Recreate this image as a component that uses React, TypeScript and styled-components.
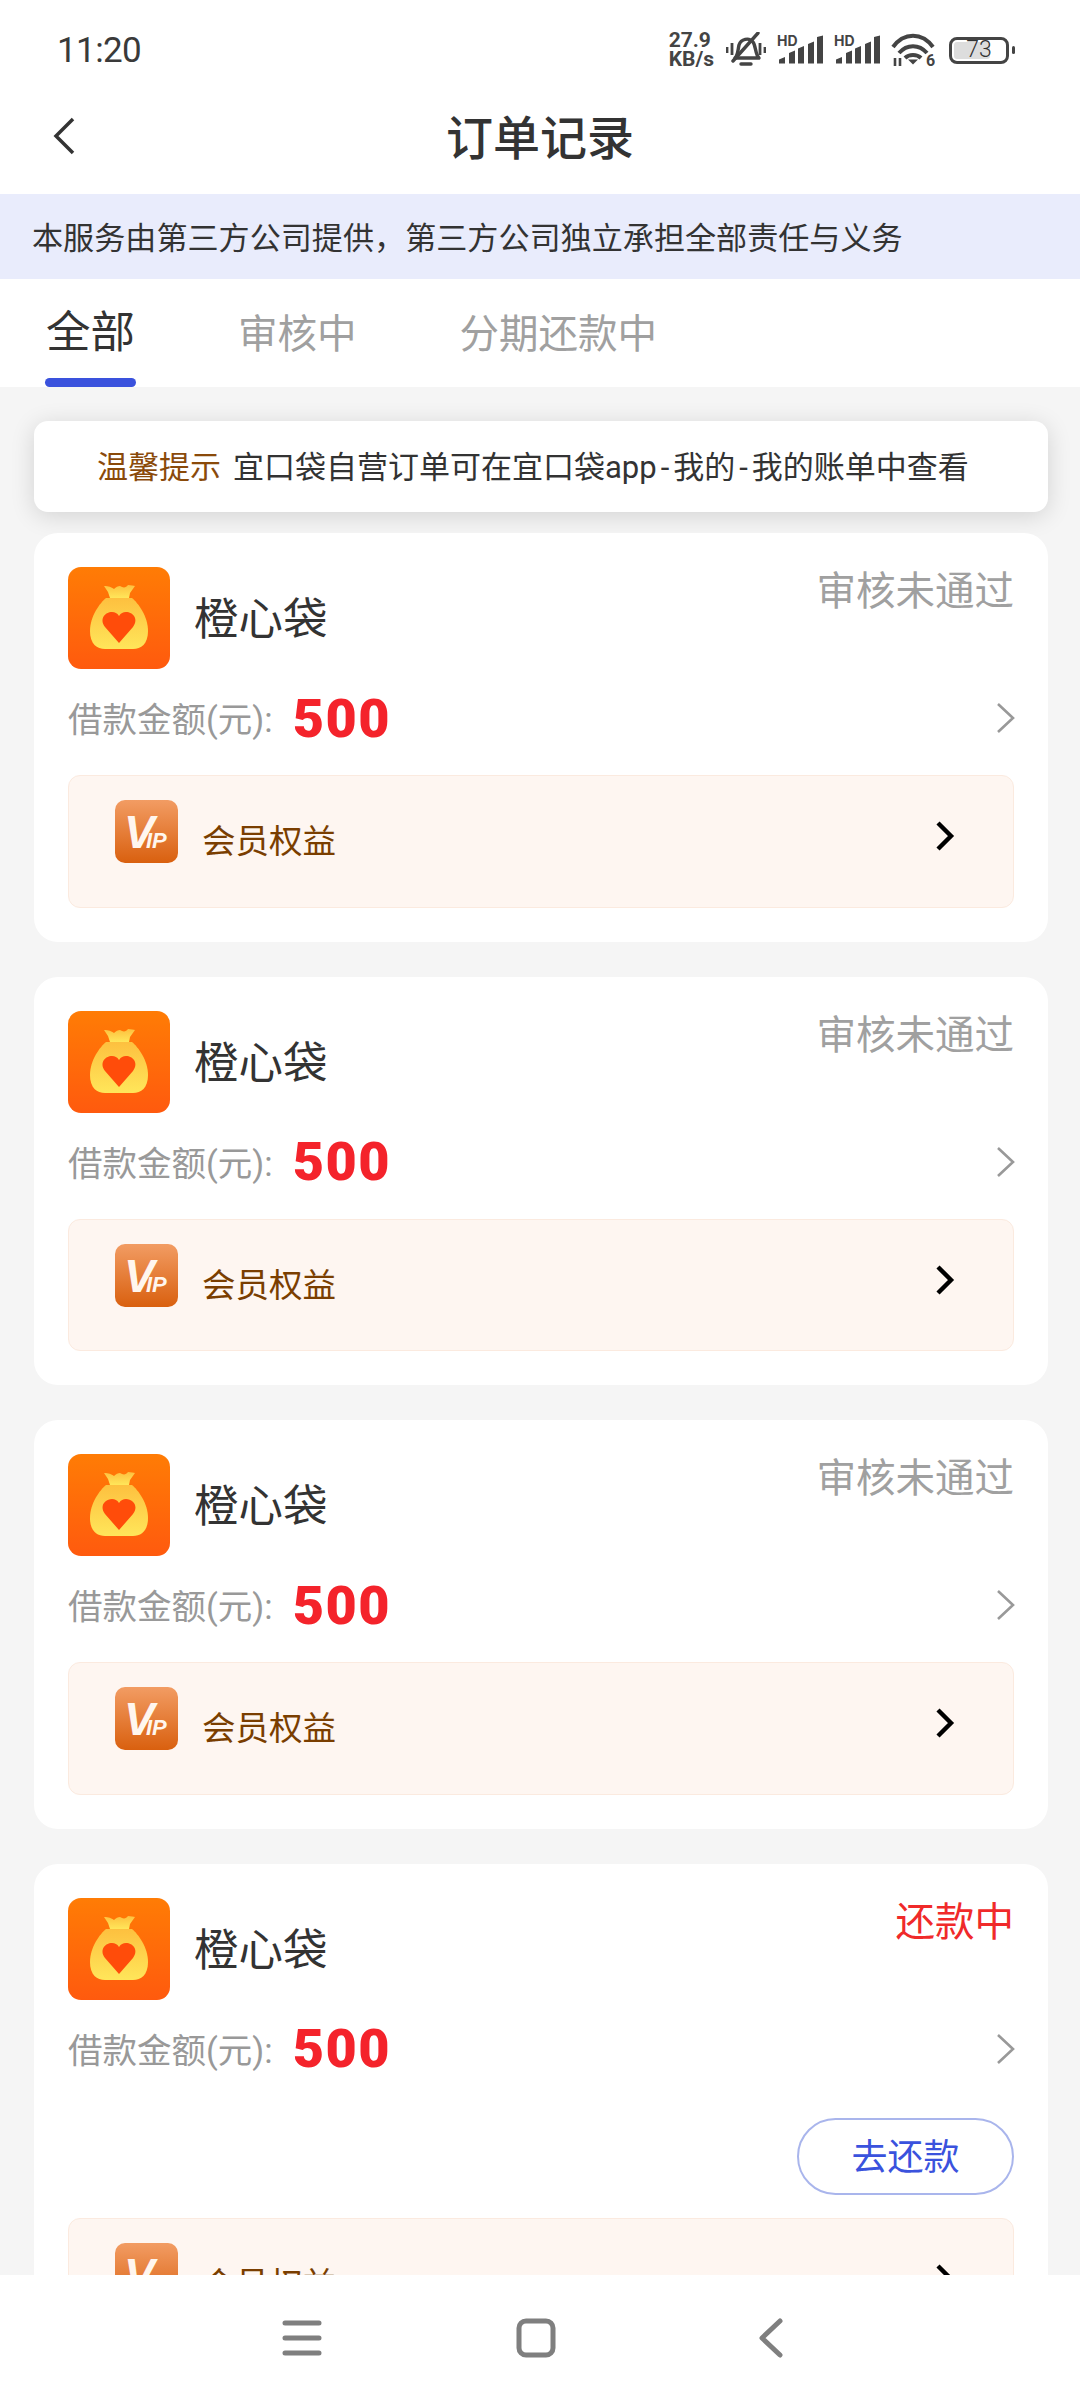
import styled, { createGlobalStyle } from "styled-components"

const GlobalStyle = createGlobalStyle`
  html, body {
    margin: 0;
    padding: 0;
    background: #fff;
  }
  body {
    font-family: Roboto, "Noto Sans CJK SC", sans-serif;
    color: #333;
  }
`

type Order = { status: string; paying?: boolean }

const orders: Order[] = [
  { status: '审核未通过' },
  { status: '审核未通过' },
  { status: '审核未通过' },
  { status: '还款中', paying: true },
]

const BagLogo = ({ id }: { id: number }) => (
  <LogoSvg viewBox="0 0 102 102">
    <defs>
      <linearGradient id={`bg${id}`} x1="0" y1="0" x2="0" y2="1">
        <stop offset="0" stopColor="#ff7c05" />
        <stop offset="1" stopColor="#ff5a0e" />
      </linearGradient>
      <linearGradient id={`bag${id}`} x1="0" y1="0" x2="0" y2="1">
        <stop offset="0" stopColor="#fdc03f" />
        <stop offset="1" stopColor="#ffe65a" />
      </linearGradient>
    </defs>
    <rect width="102" height="102" rx="13" fill={`url(#bg${id})`} />
    <path d="M36 19c5 0 7 1 10 3 2-2 4-3 6-3 3 2 6 2 8-1 3 0 6 1 7 1l-5 7-1 5H42l-2-6z" fill={`url(#bag${id})`} />
    <path d="M38 31h26c6 5 16 18 16 33 0 13-7 18-15 18H37c-8 0-15-5-15-18 0-15 10-28 16-33z" fill={`url(#bag${id})`} />
    <path d="M51 76 37 60c-6-8 0-15 7-15 3 0 5 1 7 4 2-3 4-4 7-4 7 0 13 7 7 15z" fill="#ff4c0a" />
  </LogoSvg>
)

const VipLogo = ({ id }: { id: number }) => (
  <VipSvg viewBox="0 0 63 63">
    <defs>
      <linearGradient id={`vip${id}`} x1="0" y1="0" x2="0" y2="1">
        <stop offset="0" stopColor="#f29c63" />
        <stop offset="1" stopColor="#d9600f" />
      </linearGradient>
    </defs>
    <rect width="63" height="63" rx="10" fill={`url(#vip${id})`} />
    <VipBig x="9" y="48">V</VipBig>
    <VipSmall x="31" y="48">IP</VipSmall>
  </VipSvg>
)

const SignalIcon = () => (
  <SignalSvg width="46" height="34" viewBox="0 -4 46 34">
    <SignalLabel x="0" y="11">HD</SignalLabel>
    <path d="M2 24.500 8 22v6.500H2zM12 18l6-2.500v13h-6zM21 13.500l6-2.500v17.500h-6zM31 9l6-2.500v22h-6zM40 2l6-1.500v28h-6z" fill="#444" />
  </SignalSvg>
)

const App = () => {
  return (
    <Page>
      <GlobalStyle />
      <Header>
        <StatusBar>
          <Clock>11:20</Clock>
          <StatusIcons>
            <NetSpeed>27.9<br />KB/s</NetSpeed>
            <svg width="40" height="36" viewBox="0 0 40 36" fill="none" stroke="#444" strokeWidth="3.4">
              <path d="M9 26c3-3 3-9 4-13 2-6 10-8 14-3 3 4 2 12 6 16z" strokeLinejoin="round" />
              <path d="M15 32h10M32 1 7 29" strokeLinecap="round" />
              <path d="M1 15v6M6 11v12M34 11v12M39 15v6" strokeWidth="2.8" />
            </svg>
            <SignalIcon />
            <SignalIcon />
            <WifiSvg width="44" height="38" viewBox="0 0 44 38">
              <path d="M2 14C13 -1 31 -1 42 14M8 20c8-9 20-9 28 0M14 25c4-4 12-4 16 0" fill="none" stroke="#444" strokeWidth="4" />
              <path d="M17 26.500h10l-5 5z" fill="#444" />
              <path d="M4 25v8M9 25v8" stroke="#444" strokeWidth="2.600" />
              <WifiNum x="35" y="33">6</WifiNum>
            </WifiSvg>
            <Battery>
              <BatteryFill />
              <BatteryLevel>73</BatteryLevel>
            </Battery>
            <BatteryCap />
          </StatusIcons>
        </StatusBar>
        <NavBar>
          <BackIcon width="24" height="38" viewBox="0 0 24 38" fill="none" stroke="#333" strokeWidth="3.5">
            <path d="M21 2 4 19l17 17" />
          </BackIcon>
          <Title>订单记录</Title>
        </NavBar>
      </Header>
      <Notice>本服务由第三方公司提供，第三方公司独立承担全部责任与义务</Notice>
      <Tabs>
        <Tab $active>全部</Tab>
        <Tab>审核中</Tab>
        <Tab>分期还款中</Tab>
      </Tabs>
      <Content>
        <Hint>
          <HintLabel>温馨提示</HintLabel>
          <span>宜口袋自营订单可在宜口袋app<Dash>-</Dash>我的<Dash>-</Dash>我的账单中查看</span>
        </Hint>
        <CardList>
          {orders.map((order, i) => (
            <Card key={i}>
              <CardHead>
                <BagLogo id={i} />
                <Name>橙心袋</Name>
                <Status $paying={order.paying}>{order.status}</Status>
              </CardHead>
              <AmountRow>
                <AmountLabel>借款金额(元):</AmountLabel>
                <Amount>500</Amount>
                <RowArrow width="22" height="32" viewBox="0 0 22 32" fill="none" stroke="#999" strokeWidth="2.6">
                  <path d="M3 2l15 14L3 30" />
                </RowArrow>
              </AmountRow>
              {order.paying && (
                <PayRow>
                  <PayButton>去还款</PayButton>
                </PayRow>
              )}
              <VipBox>
                <VipLogo id={i} />
                <VipText>会员权益</VipText>
                <VipArrow width="20" height="30" viewBox="0 0 20 30" fill="none" stroke="#000" strokeWidth="4.4">
                  <path d="M3 2l13 13L3 28" />
                </VipArrow>
              </VipBox>
            </Card>
          ))}
        </CardList>
      </Content>
      <BottomBar>
        <svg width="40" height="36" viewBox="0 0 40 36" stroke="#7f7f7f" strokeWidth="5" strokeLinecap="round">
          <path d="M3 3h34M3 18h34M3 33h34" />
        </svg>
        <svg width="40" height="40" viewBox="0 0 40 40" fill="none" stroke="#7f7f7f" strokeWidth="5">
          <rect x="3" y="3" width="34" height="34" rx="7" />
        </svg>
        <svg width="40" height="40" viewBox="0 0 40 40" fill="none" stroke="#7f7f7f" strokeWidth="5" strokeLinecap="round" strokeLinejoin="round">
          <path d="M30 3 12 20l18 17" />
        </svg>
      </BottomBar>
    </Page>
  )
}

const Page = styled.div`
  width: 1080px;
  height: 2400px;
  display: flex;
  flex-direction: column;
  overflow: hidden;
  background: #f5f5f5;
`

const Header = styled.header`
  background: #fff;
  flex: none;
`

const StatusBar = styled.div`
  height: 76px;
  padding: 12px 65px 0 57px;
  display: flex;
  align-items: center;
  justify-content: space-between;
`

const Clock = styled.span`
  font-size: 35px;
  letter-spacing: -0.6px;
  color: #3a3a3a;
`

const StatusIcons = styled.div`
  display: flex;
  align-items: center;
  gap: 11px;
`

const NetSpeed = styled.span`
  margin-right: 1px;
  font-size: 21px;
  line-height: 19px;
  font-weight: 700;
  color: #444;
  text-align: left;
`

const SignalSvg = styled.svg`
  margin-top: -4px;
`

const WifiSvg = styled.svg`
  margin-bottom: -4px;
`

const SignalLabel = styled.text`
  font-family: Inter, sans-serif;
  font-size: 14px;
  font-weight: 700;
  fill: #444;
`

const WifiNum = styled.text`
  font-family: Roboto, sans-serif;
  font-size: 16px;
  font-weight: 700;
  fill: #444;
`

const Battery = styled.div`
  position: relative;
  width: 60px;
  height: 27px;
  margin-left: 3px;
  box-sizing: border-box;
  border: 3px solid #444;
  border-radius: 8px;
  display: flex;
  align-items: center;
  justify-content: center;
`

const BatteryFill = styled.div`
  position: absolute;
  left: 2px;
  top: 2px;
  bottom: 2px;
  width: 36px;
  border-radius: 3px;
  background: #ddd;
`

const BatteryLevel = styled.span`
  position: relative;
  font-size: 23px;
  font-weight: 300;
  line-height: 20px;
  color: #333;
`

const BatteryCap = styled.div`
  width: 3px;
  height: 8px;
  margin-left: -8px;
  border-radius: 2px;
  background: #444;
`

const NavBar = styled.div`
  height: 106px;
  padding-bottom: 12px;
  box-sizing: border-box;
  position: relative;
  display: flex;
  align-items: center;
  justify-content: center;
`

const BackIcon = styled.svg`
  position: absolute;
  left: 52px;
  top: 29px;
`

const Title = styled.h1`
  margin: 0 0 2px;
  font-size: 47px;
  font-weight: 500;
  color: #333;
`

const Notice = styled.div`
  flex: none;
  height: 85px;
  padding: 0 0 2px 32px;
  box-sizing: border-box;
  display: flex;
  align-items: center;
  background: #e9ecfc;
  font-size: 31.1px;
  color: #333;
`

const Tabs = styled.div`
  flex: none;
  height: 108px;
  padding-left: 46px;
  box-sizing: border-box;
  display: flex;
  gap: 103px;
  background: #fff;
`

const Tab = styled.div<{ $active?: boolean }>`
  position: relative;
  height: 108px;
  line-height: ${p => (p.$active ? '108px' : '112px')};
  font-size: ${p => (p.$active ? '44.5px' : '39.5px')};
  color: ${p => (p.$active ? '#333' : '#a0a0a0')};

  ${p => p.$active && `
    &::after {
      content: '';
      position: absolute;
      left: -1px;
      right: -1px;
      bottom: 0;
      height: 9px;
      border-radius: 5px;
      background: #3a52dd;
    }
  `}
`

const Content = styled.main`
  flex: 1;
  min-height: 0;
  overflow: hidden;
  padding: 34px 32px 0 34px;
`

const Hint = styled.div`
  height: 91px;
  padding: 0 0 5px 63px;
  box-sizing: border-box;
  display: flex;
  align-items: center;
  gap: 12px;
  border-radius: 14px;
  background: #fff;
  box-shadow: 0 4px 24px rgba(0, 0, 0, 0.14);
  font-size: 31px;
  color: #333;
`

const HintLabel = styled.span`
  color: #8a4a0a;
`

const Dash = styled.span`
  padding: 0 4px;
`

const CardList = styled.div`
  margin-top: 21px;
  display: flex;
  flex-direction: column;
  gap: 35px;
`

const Card = styled.section`
  padding: 34px;
  border-radius: 24px;
  background: #fff;
  flex: none;
`

const CardHead = styled.div`
  height: 102px;
  display: flex;
  align-items: center;
`

const LogoSvg = styled.svg`
  width: 102px;
  height: 102px;
  flex: none;
`

const Name = styled.div`
  margin: 0 0 5px 24px;
  font-size: 44.5px;
  color: #333;
`

const Status = styled.div<{ $paying?: boolean }>`
  margin-left: auto;
  align-self: flex-start;
  margin-top: -5px;
  font-size: 39.5px;
  line-height: 60px;
  color: ${p => (p.$paying ? '#f02a2a' : '#a0a0a0')};
`

const AmountRow = styled.div`
  margin-top: 19px;
  height: 60px;
  display: flex;
  align-items: center;
`

const AmountLabel = styled.span`
  padding-bottom: 2px;
  font-size: 34.5px;
  color: #999;
`

const Amount = styled.span`
  margin-left: 20px;
  font-family: Roboto, sans-serif;
  font-size: 54px;
  letter-spacing: 1.5px;
  font-weight: 900;
  color: #f4232b;
`

const RowArrow = styled.svg`
  margin: 0 -3px 0 auto;
`

const PayRow = styled.div`
  margin: 39px 0 -4px;
  display: flex;
  justify-content: flex-end;
`

const PayButton = styled.button`
  width: 217px;
  height: 77px;
  padding: 0 0 4px;
  box-sizing: border-box;
  border: 2px solid #a9b5ec;
  border-radius: 39px;
  background: #fff;
  font-family: inherit;
  font-size: 36px;
  color: #3a52dd;
`

const VipBox = styled.div`
  margin-top: 27px;
  height: 132.6px;
  box-sizing: border-box;
  padding: 24px 0 0 46px;
  display: flex;
  align-items: flex-start;
  border: 1.5px solid #fbeadf;
  border-radius: 12px;
  background: #fef6f1;
`

const VipSvg = styled.svg`
  width: 63px;
  height: 63px;
  flex: none;
`

const VipBig = styled.text`
  font-family: "Liberation Sans", sans-serif;
  font-size: 46px;
  font-weight: 700;
  font-style: italic;
  fill: #fff6ee;
`

const VipSmall = styled.text`
  font-family: "Liberation Sans", sans-serif;
  font-size: 22px;
  font-weight: 700;
  font-style: italic;
  fill: #fff6ee;
`

const VipText = styled.span`
  margin: 20px 0 0 24px;
  font-size: 33.5px;
  line-height: 44px;
  color: #7a3e00;
`

const VipArrow = styled.svg`
  margin: 21px 58px 0 auto;
`

const BottomBar = styled.nav`
  flex: none;
  height: 125px;
  padding-right: 8px;
  box-sizing: border-box;
  display: flex;
  align-items: center;
  justify-content: center;
  gap: 194px;
  background: #fff;
`

export default App
